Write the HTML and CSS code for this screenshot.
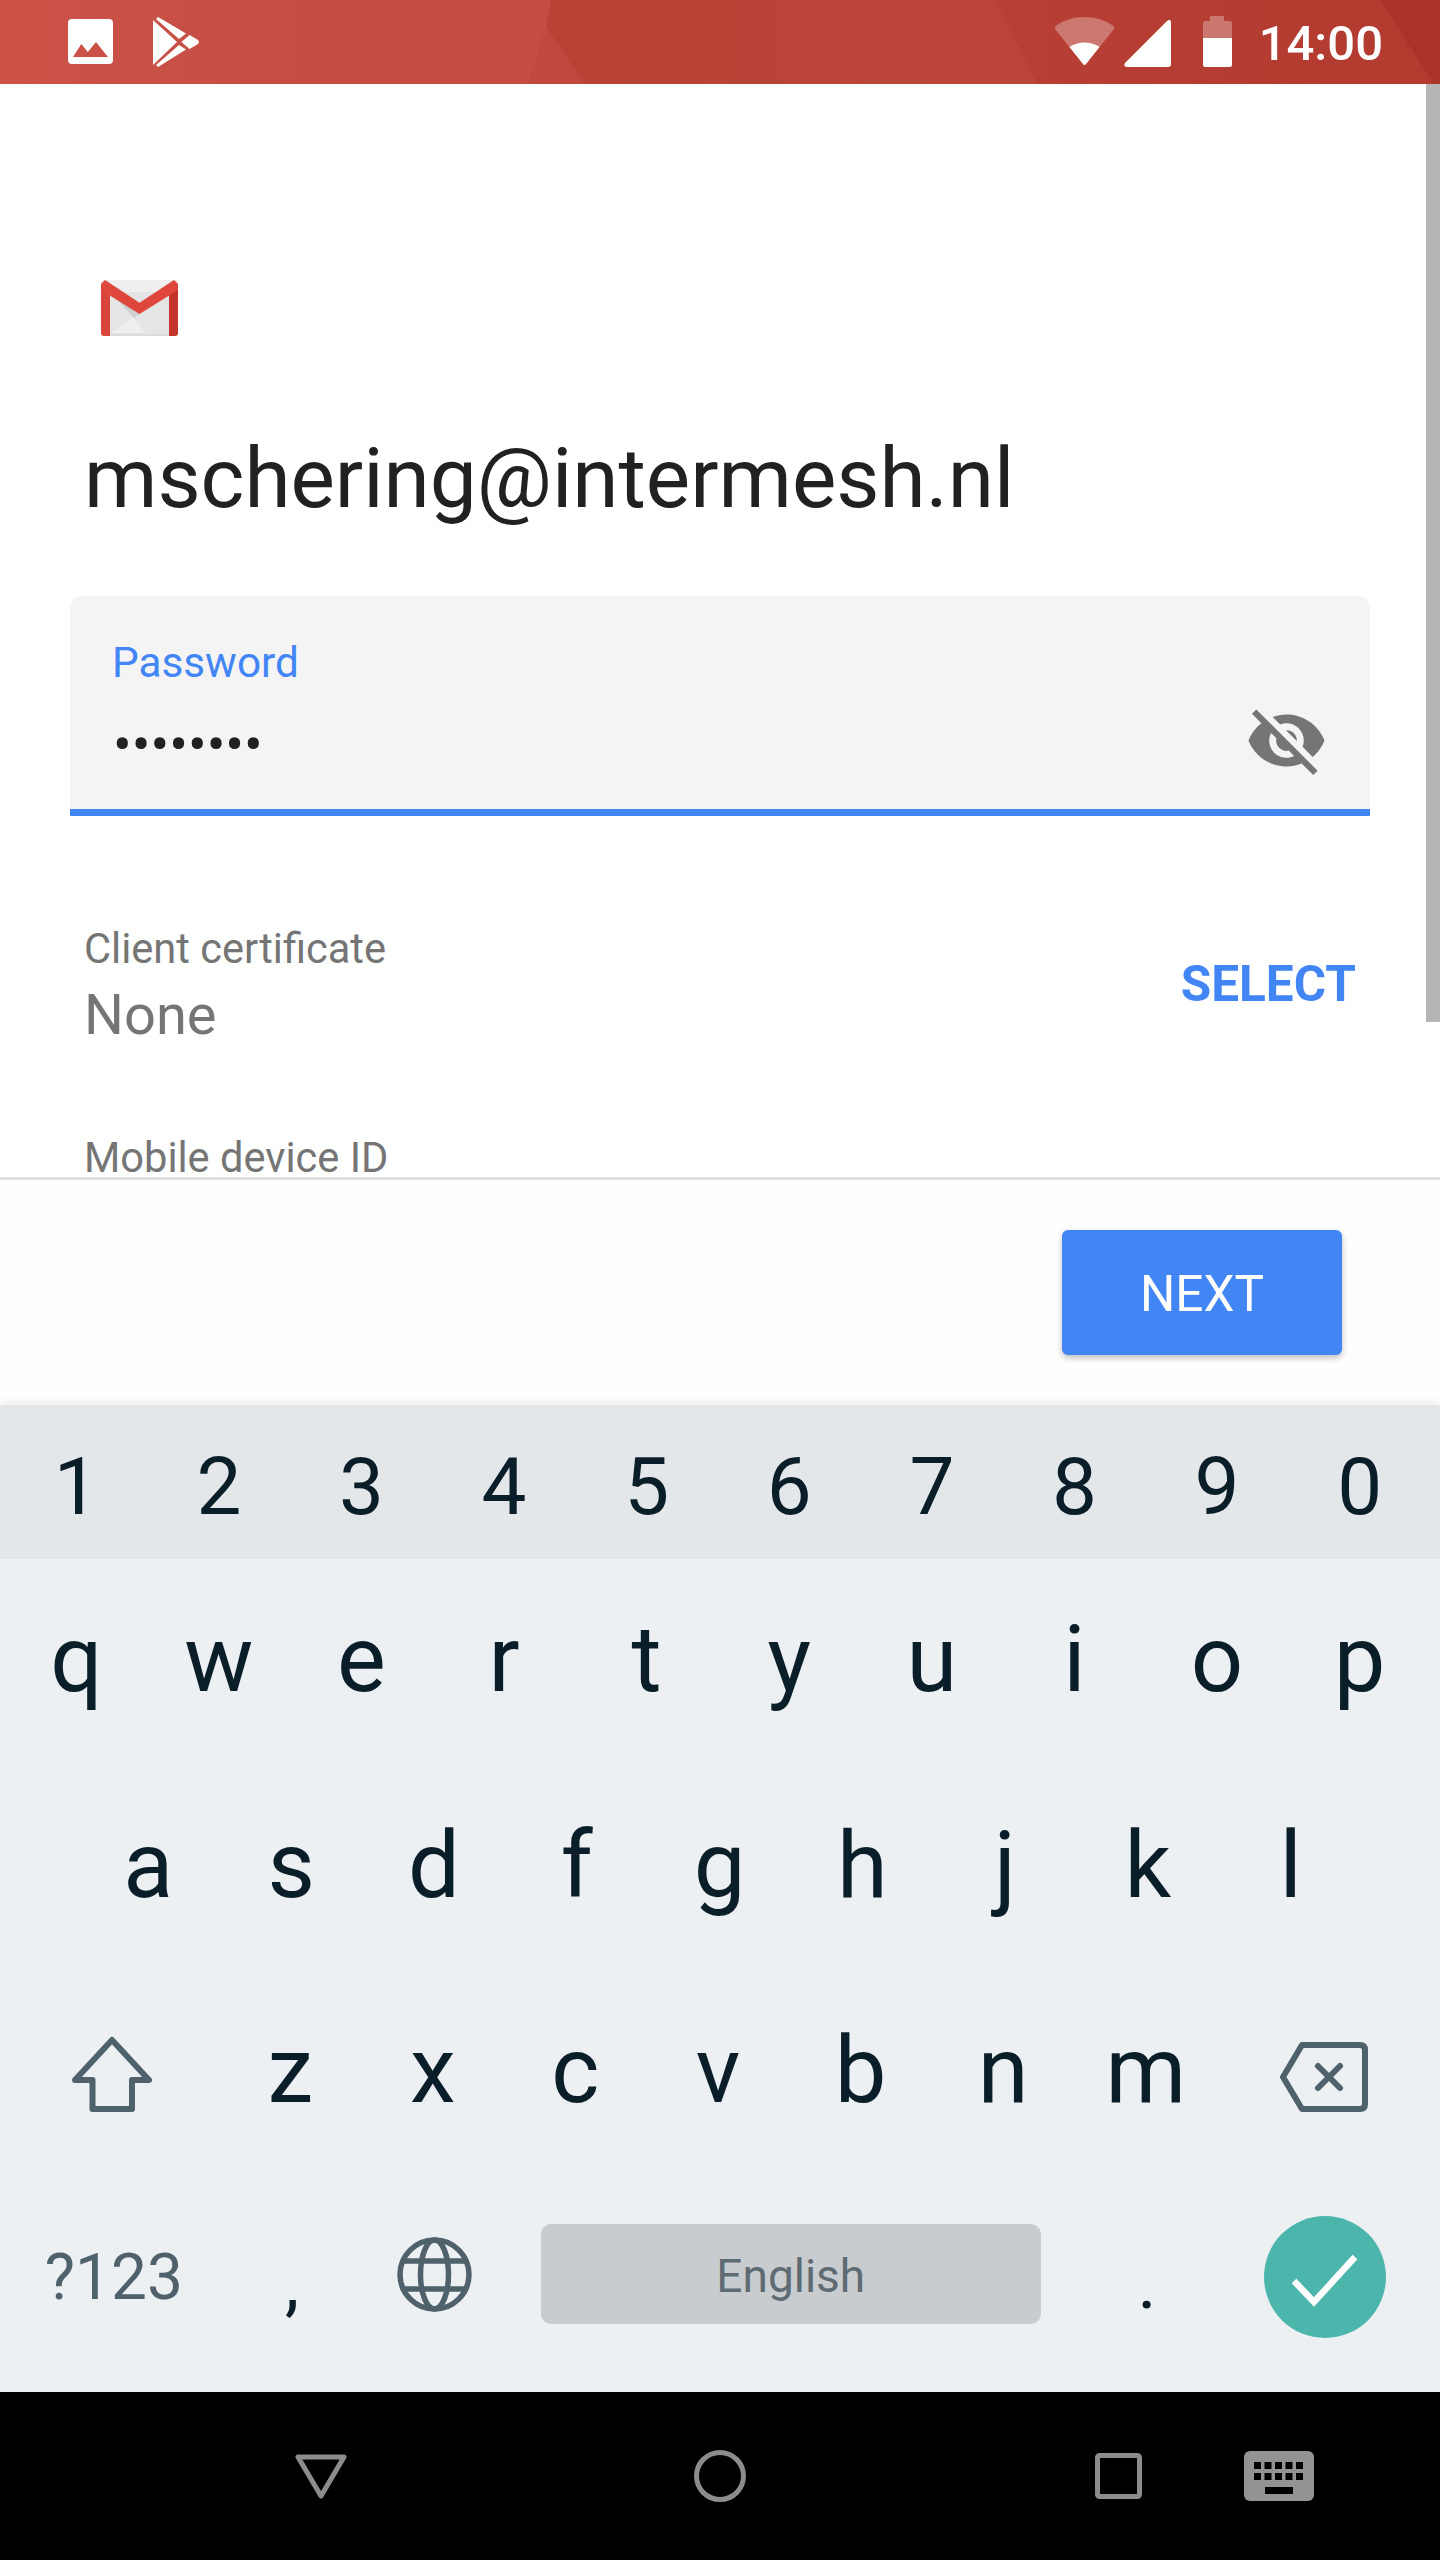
FILE: index.html
```html
<!DOCTYPE html>
<html lang="en">
<head>
<meta charset="utf-8">
<title>Gmail password</title>
<link rel="stylesheet" href="styles.css">
</head>
<body>
<div class="screen">
  <header class="status">
    <svg class="status-bg" viewBox="0 0 1440 84" preserveAspectRatio="none">
      <defs>
        <linearGradient id="g1" x1="0" x2="1"><stop offset="0" stop-color="#cd5349"/><stop offset="1" stop-color="#c64e44"/></linearGradient>
        <linearGradient id="g2" x1="0" x2="1"><stop offset="0" stop-color="#c64e44"/><stop offset="1" stop-color="#c34b41"/></linearGradient>
        <linearGradient id="g3" x1="0" x2="1"><stop offset="0" stop-color="#b94237"/><stop offset="1" stop-color="#bc453b"/></linearGradient>
        <linearGradient id="g4" x1="0" x2="1"><stop offset="0" stop-color="#b83f35"/><stop offset="1" stop-color="#b23a2f"/></linearGradient>
      </defs>
      <rect width="1440" height="84" fill="url(#g2)"/>
      <polygon points="0,0 219,0 249,84 0,84" fill="url(#g1)"/>
      <polygon points="528,84 546,27 584,84" fill="#c0483e"/>
      <polygon points="551,0 1000,0 1037,84 584,84 546,27" fill="url(#g3)"/>
      <polygon points="995,0 1379,0 1434,84 1037,84" fill="url(#g4)"/>
      <polygon points="1379,0 1440,0 1440,84 1434,84" fill="#aa342a"/>
    </svg>
    <div class="status-left">
      <svg class="ic-image" viewBox="0 0 45 45"><rect width="45" height="45" rx="4" fill="#fff"/><polygon points="5,38 13.3,25 19.8,33 28,23 40,38" fill="#cb5147"/></svg>
      <svg class="ic-play" viewBox="0 0 46 50" fill="#fff"><polygon points="0,3 24,25 0,48"/><polygon points="5,0 33,16.5 26,22 3,2"/><polygon points="28.4,25 36.6,18 45,23 46,25 45,27 36.6,32"/><polygon points="5,50 33,32.5 26,28 3,48"/></svg>
    </div>
    <div class="status-right">
      <svg class="ic-wifi" viewBox="0 0 61 48"><path d="M1 12Q0 10 3 8Q15 0 30.5 0Q46 0 58 8Q61 10 60 12L32 47Q30.5 49 29 47Z" fill="#fff" fill-opacity=".3"/><path d="M15.500 30Q22 25.500 30.500 25.500Q39 25.500 45.500 30L32 47Q30.500 49 29 47Z" fill="#fff"/></svg>
      <svg class="ic-signal" viewBox="0 0 47 47"><path d="M43 1Q47 -2 47 3L47 44Q47 47 44 47L3 47Q-1 47 1 43Z" fill="#fff"/></svg>
      <svg class="ic-battery" viewBox="0 0 29 51"><path d="M7 0H21V5H27Q29 5 29 7V22H0V7Q0 5 2 5H7Z" fill="#fff" fill-opacity=".3"/><path d="M0 22H29V49Q29 51 27 51H2Q0 51 0 49Z" fill="#fff"/></svg>
      <span class="clock">14:00</span>
    </div>
  </header>

  <main class="scroll">
    <div class="scrollbar"></div>
    <svg class="gmail" viewBox="0 0 77 56">
      <rect width="77" height="56" rx="3" fill="#efefef"/>
      <polygon points="9,12 68,12 68,53 9,53" fill="#e5e5e5"/>
      <polygon points="9,54 32,37 47,56 9,56" fill="#efefef"/>
      <polygon points="9,12 38,34 33,38" fill="#cfcfcf"/>
      <rect y="53.500" x="9" width="59" height="2.500" fill="#dcdcdc"/>
      <path d="M0 6H9V56H3Q0 56 0 53Z" fill="#d9453a"/>
      <path d="M68 6H77V53Q77 56 74 56H68Z" fill="#c5342a"/>
      <path d="M4 0L38.500 22.700L73 0L77 4V10L38.500 34L0 10V4Z" fill="#e0473c"/>
    </svg>
    <h1 class="email">mschering@intermesh.nl</h1>
    <div class="field">
      <div class="field-label">Password</div>
      <div class="field-row">
        <span class="dots">••••••••</span>
        <svg class="eye" viewBox="0 0 24 24"><path d="M12 7c2.760 0 5 2.240 5 5 0 .65-.13 1.260-.36 1.830l2.920 2.920c1.510-1.260 2.700-2.890 3.430-4.750-1.730-4.390-6-7.500-11-7.500-1.400 0-2.740.25-3.980.7l2.160 2.160C10.740 7.130 11.350 7 12 7zM2 4.270l2.280 2.280.46.46C3.080 8.300 1.780 10.020 1 12c1.730 4.390 6 7.500 11 7.500 1.550 0 3.030-.3 4.380-.84l.42.42L19.730 22 21 20.730 3.270 3 2 4.270zM7.530 9.800l1.550 1.550c-.05.21-.08.43-.08.65 0 1.660 1.340 3 3 3 .22 0 .44-.03.65-.08l1.550 1.550c-.67.33-1.410.53-2.200.53-2.760 0-5-2.240-5-5 0-.79.2-1.530.53-2.200zm4.310-.78l3.150 3.150.02-.16c0-1.660-1.340-3-3-3l-.17.01z" fill="#757575"/></svg>
      </div>
    </div>
    <div class="cert">
      <div>
        <div class="meta-label">Client certificate</div>
        <div class="meta-value">None</div>
      </div>
      <span class="select">SELECT</span>
    </div>
    <div class="meta-label device">Mobile device ID</div>
  </main>

  <div class="footer">
    <button class="next" type="button">NEXT</button>
  </div>

  <section class="keyboard">
    <div class="row digits">
      <span class="key">1</span><span class="key">2</span><span class="key">3</span><span class="key">4</span><span class="key">5</span><span class="key">6</span><span class="key">7</span><span class="key">8</span><span class="key">9</span><span class="key">0</span>
    </div>
    <div class="row letters top">
      <span class="key">q</span><span class="key">w</span><span class="key">e</span><span class="key">r</span><span class="key">t</span><span class="key">y</span><span class="key">u</span><span class="key">i</span><span class="key">o</span><span class="key">p</span>
    </div>
    <div class="row letters home">
      <span class="key">a</span><span class="key">s</span><span class="key">d</span><span class="key">f</span><span class="key">g</span><span class="key">h</span><span class="key">j</span><span class="key">k</span><span class="key">l</span>
    </div>
    <div class="row letters shiftrow">
      <span class="key wide">
        <svg class="ic-shift" viewBox="0 0 80 76"><path d="M40 4L77 44H60V73H20.500V44H3Z" fill="none" stroke="#4f616b" stroke-width="6" stroke-linejoin="round"/></svg>
      </span>
      <span class="key">z</span><span class="key">x</span><span class="key">c</span><span class="key">v</span><span class="key">b</span><span class="key">n</span><span class="key">m</span>
      <span class="key wide">
        <svg class="ic-back" viewBox="0 0 88 70"><path d="M3 35L22 3H80Q85 3 85 8V62Q85 67 80 67H22Z" fill="none" stroke="#4f616b" stroke-width="6" stroke-linejoin="round"/><path d="M38 24L60 46M60 24L38 46" stroke="#4f616b" stroke-width="6" stroke-linecap="round"/></svg>
      </span>
    </div>
    <div class="row letters bottom">
      <span class="key wide sym">?123</span>
      <span class="key punct">,</span>
      <span class="key">
        <svg class="ic-globe" viewBox="0 0 75 75" fill="none" stroke="#4f616b" stroke-width="5.500"><circle cx="37.500" cy="37.500" r="34.500"/><ellipse cx="37.500" cy="37.500" rx="14" ry="34.500"/><path d="M7 24H68M7 52H68"/></svg>
      </span>
      <span class="key spacekey"><span class="spacebar">English</span></span>
      <span class="key punct">.</span>
      <span class="key wide">
        <svg class="ic-enter" viewBox="0 0 122 122"><circle cx="61" cy="61" r="61" fill="#4db6ac"/><path d="M30 65L50 86L91 41" fill="none" stroke="#fff" stroke-width="6.500"/></svg>
      </span>
    </div>
  </section>

  <nav class="navbar">
    <svg class="nav-back" viewBox="0 0 52 45"><path d="M3 3H49L26 42Z" fill="none" stroke="#8c8c8c" stroke-width="5" stroke-linejoin="round"/></svg>
    <svg class="nav-home" viewBox="0 0 52 52"><circle cx="26" cy="26" r="23.500" fill="none" stroke="#8c8c8c" stroke-width="5"/></svg>
    <svg class="nav-recent" viewBox="0 0 47 46"><rect x="2.500" y="2.500" width="42" height="41" rx="2" fill="none" stroke="#8c8c8c" stroke-width="5"/></svg>
    <svg class="nav-kbd" viewBox="0 0 70 50">
      <rect width="70" height="50" rx="6" fill="#939393"/>
      <g fill="#000">
        <rect x="10" y="11" width="7" height="7"/><rect x="20.500" y="11" width="7" height="7"/><rect x="31" y="11" width="7" height="7"/><rect x="41.500" y="11" width="7" height="7"/><rect x="52" y="11" width="7" height="7"/>
        <rect x="10" y="22" width="7" height="7"/><rect x="20.500" y="22" width="7" height="7"/><rect x="31" y="22" width="7" height="7"/><rect x="41.500" y="22" width="7" height="7"/><rect x="52" y="22" width="7" height="7"/>
        <rect x="21" y="36" width="28" height="7"/>
      </g>
    </svg>
  </nav>
</div>
</body>
</html>
```
FILE: styles.css
```css
* { box-sizing: border-box; }
html, body { margin: 0; padding: 0; background: #fff; }
body { font-family: Roboto, "Noto Sans", sans-serif; }
svg { display: block; flex: none; }

.screen {
  width: 1440px;
  height: 2560px;
  display: flex;
  flex-direction: column;
  overflow: hidden;
}

/* status bar */
.status {
  position: relative;
  flex: none;
  height: 84px;
  display: flex;
  justify-content: space-between;
  padding: 0 57px 0 68px;
  color: #fff;
}
.status-bg { position: absolute; left: 0; top: 0; width: 100%; height: 100%; }
.status-left, .status-right { position: relative; display: flex; }
.status-left { gap: 40px; }
.ic-image { width: 45px; height: 45px; margin-top: 19px; }
.ic-play { width: 46px; height: 50px; margin-top: 17px; }
.ic-wifi { width: 61px; height: 48px; margin-top: 17px; }
.ic-signal { width: 47px; height: 47px; margin-top: 20px; margin-left: 9px; }
.ic-battery { width: 29px; height: 51px; margin-top: 16px; margin-left: 32px; }
.clock { font-size: 49px; font-weight: 500; line-height: 56px; margin-top: 16px; margin-left: 27px; }

/* scrolling form */
.scroll {
  position: relative;
  flex: none;
  height: 1093px;
  background: #fff;
  padding: 196px 70px 0;
}
.scrollbar { position: absolute; top: 0; right: 0; width: 14px; height: 938px; background: #b5b5b5; }
.gmail { width: 77px; height: 56px; margin-left: 31px; }
.email {
  margin: 92px 0 68px 14px;
  font-size: 83.700px;
  line-height: 100px;
  font-weight: 400;
  color: #212121;
  white-space: nowrap;
}
.field {
  height: 220px;
  background: #f4f4f4;
  border-bottom: 7px solid #4285f4;
  border-radius: 12px 12px 0 0;
  padding: 42px 42.500px 0 42px;
}
.field-label { font-size: 42.300px; line-height: 50px; color: #4285f4; }
.field-row { display: flex; justify-content: space-between; align-items: center; margin-top: 11px; height: 83px; }
.dots { font-size: 55.500px; line-height: 83px; color: #212121; padding: 10px 0 0 1px; }
.eye { width: 83px; height: 83px; }

.cert {
  display: flex;
  justify-content: space-between;
  align-items: center;
  margin-top: 108px;
  padding: 0 14px 0 14px;
}
.meta-label { font-size: 41.600px; line-height: 50px; color: #757575; }
.meta-value { font-size: 56px; line-height: 64px; color: #757575; margin-top: 9px; }
.select { font-size: 49.500px; font-weight: 700; color: #4285f4; padding-bottom: 3px; }
.device { margin: 92px 0 0 14px; line-height: 38px; }

/* action bar */
.footer {
  flex: none;
  height: 228px;
  border-top: 3px solid #dedede;
  background: #fefefe;
  padding: 50px 98px 0 0;
  display: flex;
  justify-content: flex-end;
  align-items: flex-start;
}
.next {
  width: 280px;
  height: 125px;
  border: 0;
  border-radius: 6px;
  background: #4285f4;
  color: #fff;
  font-family: inherit;
  font-size: 49.500px;
  padding: 2px 0 0;
  box-shadow: 0 3px 6px rgba(0, 0, 0, .25);
}

/* keyboard */
.keyboard {
  flex: none;
  height: 987px;
  background: #ecf0f3;
  color: #0a1e29;
  box-shadow: 0 -3px 8px rgba(0, 0, 0, .07);
  position: relative;
}
.row { display: flex; padding: 0 9px 0 5px; }
.key {
  flex: 2 1 0;
  min-width: 0;
  display: flex;
  align-items: center;
  justify-content: center;
}
.key.wide { flex-grow: 3; }
.key.spacekey { flex-grow: 8; }
.digits { height: 154px; padding-top: 10px; background: #e3e7ea; font-size: 80px; }
.letters { height: 207px; padding-bottom: 6px; font-size: 92px; }
.top { height: 204px; padding-bottom: 3px; }
.home { padding: 4px 78px 6px 77px; }
.bottom { height: 215px; padding: 0 8px 22px 7px; }
.sym { font-size: 64px; color: #4f616b; padding-top: 8px; }
.punct { font-size: 72px; padding-top: 20px; }
.ic-shift { width: 80px; height: 76px; margin-top: 6px; }
.ic-back { width: 88px; height: 70px; margin-top: 12px; }
.ic-globe { width: 75px; height: 75px; margin-top: 2px; }
.ic-enter { width: 122px; height: 122px; margin-top: 6px; }
.spacebar {
  width: 500px;
  height: 100px;
  display: flex;
  align-items: center;
  justify-content: center;
  background: #c8cccf;
  border-radius: 10px;
  font-size: 46px;
  color: #5f6b73;
  padding-top: 5px;
}

/* navigation bar */
.navbar { flex: none; height: 168px; background: #000; position: relative; display: flex; align-items: center; padding-left: 295px; }
.nav-back { width: 52px; height: 45px; margin-right: 347px; }
.nav-home { width: 52px; height: 52px; margin-right: 349px; }
.nav-recent { width: 47px; height: 46px; margin-right: 102px; }
.nav-kbd { width: 70px; height: 50px; }
```
